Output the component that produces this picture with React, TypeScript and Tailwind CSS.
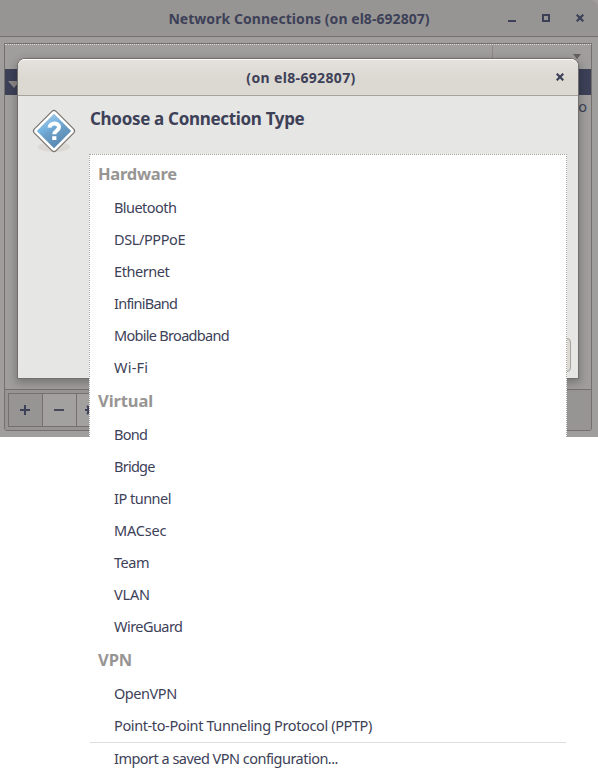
import React from "react";

type Entry = { label: string; tracking: string };
type Group = { title: string; tracking: string; items: Entry[] };

const groups: Group[] = [
  {
    title: "Hardware",
    tracking: "tracking-[-0.25px]",
    items: [
      { label: "Bluetooth", tracking: "tracking-[-0.55px]" },
      { label: "DSL/PPPoE", tracking: "tracking-[-0.4px]" },
      { label: "Ethernet", tracking: "tracking-[-0.42px]" },
      { label: "InfiniBand", tracking: "tracking-[-0.75px]" },
      { label: "Mobile Broadband", tracking: "tracking-[-0.7px]" },
      { label: "Wi-Fi", tracking: "tracking-[0.2px]" },
    ],
  },
  {
    title: "Virtual",
    tracking: "tracking-[-0.1px]",
    items: [
      { label: "Bond", tracking: "tracking-[-0.7px]" },
      { label: "Bridge", tracking: "tracking-[-0.75px]" },
      { label: "IP tunnel", tracking: "tracking-[-0.5px]" },
      { label: "MACsec", tracking: "tracking-[-0.2px]" },
      { label: "Team", tracking: "tracking-[-0.45px]" },
      { label: "VLAN", tracking: "tracking-[-0.2px]" },
      { label: "WireGuard", tracking: "tracking-[-0.55px]" },
    ],
  },
  {
    title: "VPN",
    tracking: "tracking-[-0.1px]",
    items: [
      { label: "OpenVPN", tracking: "tracking-[-0.45px]" },
      { label: "Point-to-Point Tunneling Protocol (PPTP)", tracking: "tracking-[-0.38px]" },
    ],
  },
];

function CloseIcon() {
  return (
    <svg className="h-2 w-2" viewBox="0 0 8 8" fill="none" stroke="#3d4158" strokeWidth="2.2">
      <path d="M.7.7l6.6 6.6M7.3.7L.7 7.3" />
    </svg>
  );
}

function QuestionIcon() {
  return (
    <svg className="h-12 w-12 shrink-0" viewBox="0 0 48 48">
      <defs>
        <linearGradient id="sign" x1="0" y1="0" x2="0.5" y2="1">
          <stop offset="0" stopColor="#b4d0e4" />
          <stop offset="0.45" stopColor="#74b2e0" />
          <stop offset="0.6" stopColor="#6c9fc8" />
          <stop offset="1" stopColor="#5788b2" />
        </linearGradient>
      </defs>
      <ellipse cx="24" cy="40" rx="16" ry="5" fill="#d9d5cf" opacity=".8" />
      <path d="M22.2 4.2q1.8-1.6 3.6 0l18 18q1.6 1.8 0 3.6l-18 18q-1.8 1.6-3.6 0l-18-18q-1.6-1.8 0-3.6z" fill="#fff" stroke="#77736f" strokeWidth="1.2" />
      <path d="M24 6.8L41.2 24 24 41.2 6.8 24z" fill="url(#sign)" />
      <path d="M19.5 20.7c.3-5.5 9.5-5.2 9.5-.6 0 3.8-4.7 3.5-4.7 7.2" fill="none" stroke="#fff" strokeWidth="4" />
      <path d="M22.2 29.2h4.2v3.8h-4.2z" fill="#fff" />
    </svg>
  );
}

function ParentWindow() {
  return (
    <section className="flex h-[437px] w-full flex-col bg-[#a09e9c]">
      <header className="relative flex h-[37px] shrink-0 items-center justify-center rounded-tr-lg border-b border-[#74706e] bg-[#979593]">
        <h1 className="text-[14px] font-bold tracking-[0.05px]">Network Connections (on el8-692807)</h1>
        <div className="absolute right-[14px] top-[14px] flex items-center">
          <i className="mr-[26px] mt-[6px] h-[2px] w-2 bg-[#3d4158]" />
          <i className="mr-[26px] h-2 w-2 border-2 border-[#3d4158]" />
          <CloseIcon />
        </div>
      </header>
      <div className="ml-1 mr-[6px] mt-[6px] flex h-[388px] flex-col overflow-hidden rounded-b-[3px] border border-[#74706e] bg-[#a09e9c]">
        <div className="flex h-[25px] shrink-0 border-t border-dotted border-[#dedcd8]">
          <div className="w-[488px] border-r border-[#8c8986]" />
          <svg className="ml-[80px] mt-[9px] h-[5px] w-2" viewBox="0 0 8 5"><path d="M0 0h8L4 5z" fill="#64605f" /></svg>
        </div>
        <div className="flex h-[26px] shrink-0 items-center bg-[#3d4158] pl-[3px]">
          <svg className="mt-1 h-[7px] w-[12px]" viewBox="0 0 12 7"><path d="M0 0h12L6 7z" fill="#8b8886" /></svg>
        </div>
        <div className="flex-1 overflow-hidden pr-1 pt-px text-right text-[14.5px]">o</div>
        <div className="flex h-[41px] shrink-0 border-t border-[#74706e] bg-[#979593] pl-[3px] pt-[3px]">
          <div className="flex h-[34px] border border-[#74706e] bg-[#a3a19f]">
            <div className="flex w-[34px] items-center justify-center border-r border-[#74706e] bg-[#979593]">
              <svg className="mr-px h-[10px] w-[10px]" viewBox="0 0 10 10"><path d="M5 0v10M0 5h10" stroke="#3d4158" strokeWidth="2" /></svg>
            </div>
            <div className="flex w-[34px] items-center justify-center border-r border-[#74706e]"><i className="mr-[2px] h-[2px] w-[10px] bg-[#494a59]" /></div>
            <div className="flex w-[34px] items-center pl-2">
              <svg className="h-3 w-3" viewBox="0 0 12 12" fill="none" stroke="#3d4158" strokeWidth="2"><circle cx="6" cy="6" r="3" /><path d="M6 0v3M6 9v3M0 6h3M9 6h3M2 2l2 2M8 8l2 2M10 2L8 4M4 8l-2 2" /></svg>
            </div>
          </div>
        </div>
      </div>
    </section>
  );
}

function ConnectionDialog() {
  return (
    <section className="absolute left-[17px] top-[58px] flex h-[321px] w-[562px] flex-col rounded-t-lg border border-[#716e6c] bg-[#e6e6e4] shadow-[0_3px_8px_1px_rgba(0,0,0,0.25)]">
      <header className="relative flex h-[37px] shrink-0 items-center justify-center rounded-t-[7px] border-b border-t border-b-[#a6a39f] border-t-white bg-linear-to-b from-[#e5e2dd] to-[#dcd9d3] to-50%">
        <div className="ml-[6px] text-[14px] font-bold tracking-[0.35px]">(on el8-692807)</div>
        <div className="absolute right-[14px] top-[13px]"><CloseIcon /></div>
      </header>
      <div className="flex flex-1 gap-3 pl-3 pt-[11px]">
        <QuestionIcon />
        <h2 className="text-[17px] font-bold leading-6 tracking-[-0.32px]">Choose a Connection Type</h2>
      </div>
      <div className="mb-[6px] mr-[7px] h-[34px] w-20 self-end rounded border border-[#a6a39f] bg-[#dcd9d3]" />
    </section>
  );
}

function ConnectionMenu() {
  return (
    <div className="absolute left-[89px] top-[154px] h-[620px] w-[478px] overflow-hidden bg-white pt-[3px]">
      {groups.map((group) => (
        <section key={group.title}>
          <h3 className={"flex h-[35px] items-center pb-px pl-[9px] text-[16.5px] font-bold text-[#979593] " + group.tracking}>{group.title}</h3>
          {group.items.map((item) => (
            <div key={item.label} className="flex h-8 items-center whitespace-nowrap pl-[25px] text-[14.5px]">
              <span className={item.tracking}>{item.label}</span>
            </div>
          ))}
        </section>
      ))}
      <div className="mx-px flex h-[33px] items-center border-t border-[#e0dfdd] pl-6 text-[14.5px]">
        <span className="tracking-[-0.52px]">Import a saved VPN configuration...</span>
      </div>
      <div className="pointer-events-none absolute inset-x-0 top-0 h-[283px] border-l border-r border-t border-dotted border-[#a6a39f]" />
    </div>
  );
}

export default function App() {
  return (
    <main className="relative h-[774px] w-[598px] overflow-hidden bg-white font-['Noto_Sans','Open_Sans',sans-serif] text-[#3d4158]">
      <ParentWindow />
      <ConnectionDialog />
      <ConnectionMenu />
    </main>
  );
}
